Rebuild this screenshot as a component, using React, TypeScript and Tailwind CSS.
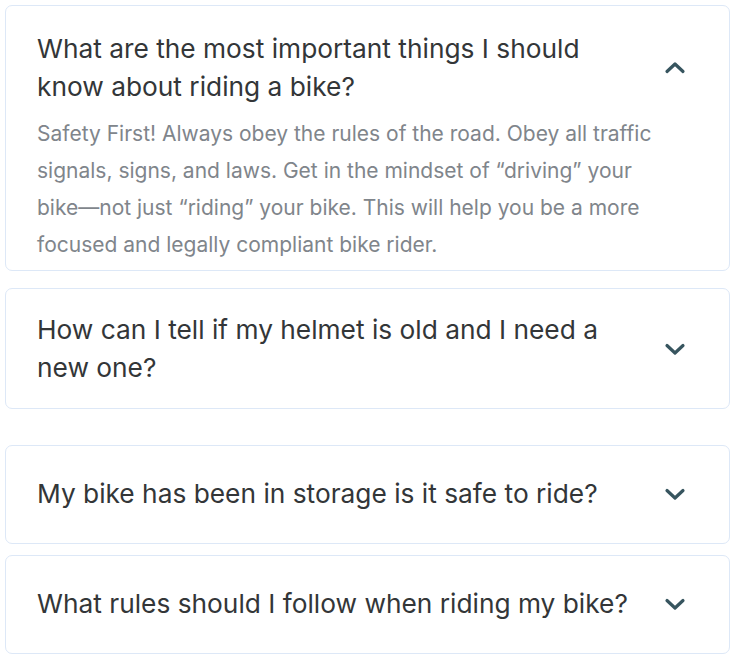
import React, { useState } from "react";

type Item = { q: string; a?: string; cls: string };

const items: Item[] = [
    {
        q: "What are the most important things I should know about riding a bike?",
        a: "Safety First! Always obey the rules of the road. Obey all traffic signals, signs, and laws. Get in the mindset of “driving” your bike—not just “riding” your bike. This will help you be a more focused and legally compliant bike rider.",
        cls: "mt-[5px] pt-[24px] pb-[7px]",
    },
    { q: "How can I tell if my helmet is old and I need a new one?", cls: "mt-[17px] pt-[22px] pb-[21px]" },
    { q: "My bike has been in storage is it safe to ride?", cls: "mt-[36px] pt-[29px] pb-[30px]" },
    { q: "What rules should I follow when riding my bike?", cls: "mt-[11px] pt-[29px] pb-[30px]" },
];

function Chevron({ up }: { up: boolean }) {
    return (
        <svg width="22" height="14" viewBox="0 0 22 14" className={up ? "rotate-180" : ""}>
            <path d="M3 3.5 L11 11 L19 3.5" fill="none" stroke="#37555f" strokeWidth="3.2" strokeLinecap="round" strokeLinejoin="round" />
        </svg>
    );
}

export default function App() {
    const [open, setOpen] = useState(0);

    return (
        <div className="bg-white w-[735px] h-[661px] px-[5px] overflow-hidden font-['Inter',sans-serif]">
            {items.map((it, i) => (
                <div key={i} className={`${it.cls} border border-[#dde8f7] rounded-[7px] pl-[31px] pr-[43px] bg-white`}>
                    <button
                        className="w-full flex items-center justify-between text-left cursor-pointer"
                        onClick={() => setOpen(open === i ? -1 : i)}
                    >
                        <span className="text-[26.3px] leading-[38px] text-[#333638] max-w-[600px]">{it.q}</span>
                        <Chevron up={open === i} />
                    </button>
                    {open === i && it.a && (
                        <p className="mt-[9px] text-[21px] leading-[37px] text-[#80858b] max-w-[625px]">{it.a}</p>
                    )}
                </div>
            ))}
        </div>
    );
}
